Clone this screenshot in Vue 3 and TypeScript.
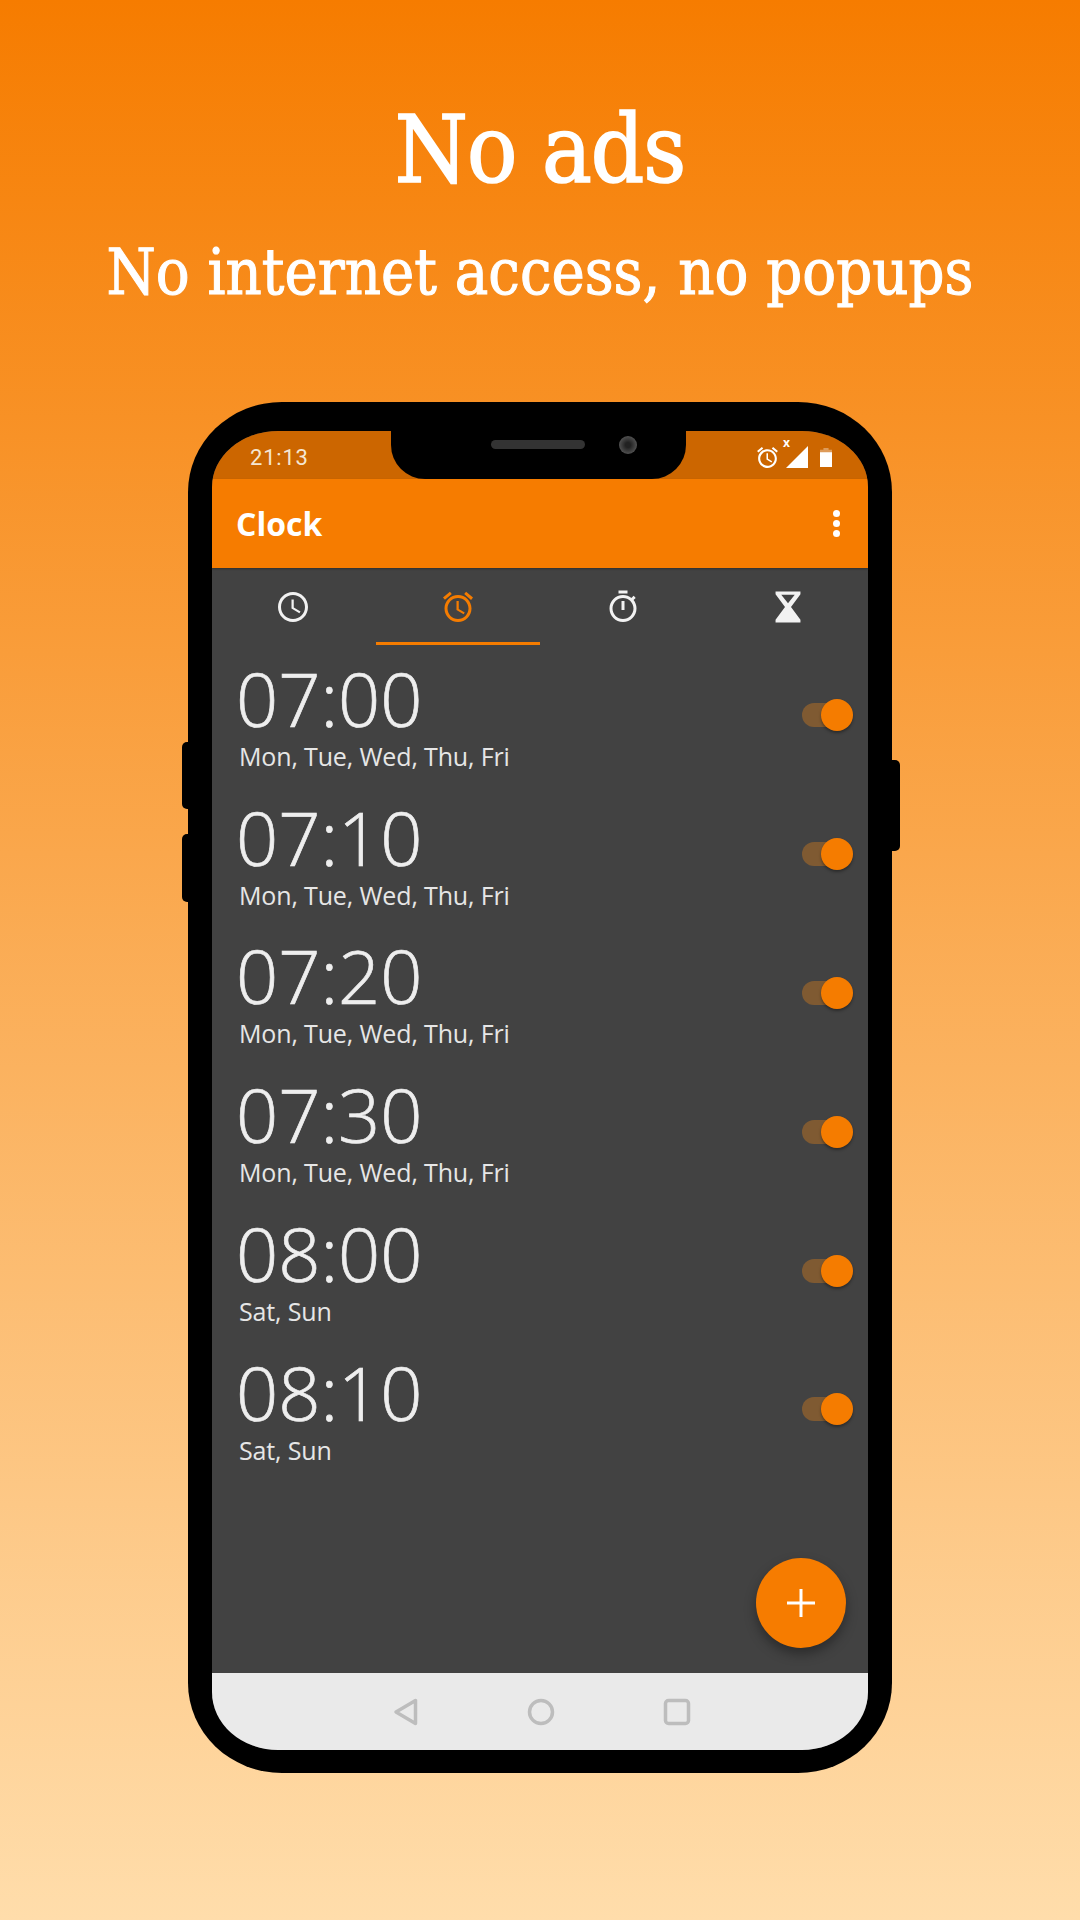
<script setup lang="ts">
interface Alarm { time: string; days: string }
const weekdays = 'Mon, Tue, Wed, Thu, Fri'
const weekend = 'Sat, Sun'
const alarms: Alarm[] = [
  { time: '07:00', days: weekdays },
  { time: '07:10', days: weekdays },
  { time: '07:20', days: weekdays },
  { time: '07:30', days: weekdays },
  { time: '08:00', days: weekend },
  { time: '08:10', days: weekend },
]
const alarmPath = 'M22 5.72l-4.6-3.86-1.29 1.53 4.6 3.86L22 5.72zM7.88 3.39L6.6 1.86 2 5.71l1.29 1.53 4.59-3.85zM12.5 8H11v6l4.75 2.85.75-1.23-4-2.37V8zM12 4c-4.97 0-9 4.03-9 9s4.02 9 9 9c4.97 0 9-4.03 9-9s-4.03-9-9-9zm0 16c-3.87 0-7-3.13-7-7s3.13-7 7-7 7 3.13 7 7-3.13 7-7 7z'
</script>

<template>
  <main class="page">
    <h1 class="title">No ads</h1>
    <p class="subtitle">No internet access, no popups</p>

    <div class="phone">
      <span class="side side-l1"></span>
      <span class="side side-l2"></span>
      <span class="side side-r"></span>

      <div class="screen">
        <div class="status">
          <span class="status-time">21:13</span>
          <div class="status-icons">
            <svg class="st-alarm" viewBox="0 0 24 24"><path :d="alarmPath" /></svg>
            <svg class="st-signal" viewBox="0 0 22 22"><path d="M22 0v22H0z" /></svg>
            <span class="st-x">x</span>
            <svg class="st-batt" viewBox="0 0 14 22"><path d="M4 2V0h6v2h4v20H0V2z" opacity=".35" /><path d="M0 5h14v17H0z" /></svg>
          </div>
        </div>

        <header class="appbar">
          <span class="appbar-title">Clock</span>
          <div class="more"><i></i><i></i><i></i></div>
        </header>

        <nav class="tabs">
          <div class="tab">
            <svg class="tab-icon" viewBox="0 0 24 24"><path d="M11.99 2C6.47 2 2 6.48 2 12s4.47 10 9.99 10C17.52 22 22 17.52 22 12S17.52 2 11.99 2zM12 20c-4.42 0-8-3.58-8-8s3.58-8 8-8 8 3.58 8 8-3.58 8-8 8z" /><path d="M12.5 7H11v6l5.25 3.15.75-1.23-4.5-2.67z" /></svg>
          </div>
          <div class="tab active">
            <svg class="tab-icon" viewBox="0 0 24 24"><path :d="alarmPath" /></svg>
          </div>
          <div class="tab">
            <svg class="tab-icon" viewBox="0 0 24 24"><path d="M15 1H9v2h6V1zm-4 13h2V8h-2v6zm8.03-6.61l1.42-1.42c-.43-.51-.9-.99-1.41-1.41l-1.42 1.42C16.07 4.74 14.12 4 12 4c-4.97 0-9 4.03-9 9s4.02 9 9 9 9-4.03 9-9c0-2.12-.74-4.07-1.97-5.61zM12 20c-3.87 0-7-3.13-7-7s3.13-7 7-7 7 3.13 7 7-3.13 7-7 7z" /></svg>
          </div>
          <div class="tab">
            <svg class="tab-icon" viewBox="0 0 24 24"><path fill-rule="evenodd" d="M3.7 1.7H20.3V3.5L14 12L20.3 20.5V22.3H3.7V20.5L10 12L3.7 3.5ZM7.500 3.800L12 9.500L16.500 3.800Z" /></svg>
          </div>
        </nav>

        <section class="list">
          <div v-for="a in alarms" :key="a.time" class="row">
            <div class="row-text">
              <div class="time">{{ a.time }}</div>
              <div class="days">{{ a.days }}</div>
            </div>
            <div class="toggle"><span class="track"></span><span class="thumb"></span></div>
          </div>
          <button class="fab" type="button" aria-label="Add alarm">
            <svg viewBox="0 0 28 28" width="28" height="28"><path d="M12.5 0h3v12.5H28v3H15.500V28h-3V15.500H0v-3h12.500z" /></svg>
          </button>
        </section>

        <footer class="navbar">
          <svg class="nav-icon" viewBox="0 0 30 30"><path d="M25.500 3.500v23L6 15z" /></svg>
          <svg class="nav-icon" viewBox="0 0 30 30"><circle cx="15" cy="15" r="11.500" /></svg>
          <svg class="nav-icon" viewBox="0 0 30 30"><rect x="3.500" y="3.500" width="23" height="23" rx="3" /></svg>
        </footer>

        <div class="notch">
          <span class="speaker"></span>
          <span class="camera"></span>
        </div>
      </div>
    </div>
  </main>
</template>

<style scoped>
.page {
  width: 1080px;
  height: 1920px;
  box-sizing: border-box;
  padding-top: 100px;
  display: flex;
  flex-direction: column;
  align-items: center;
  overflow: hidden;
  background: linear-gradient(180deg, #f67c00 0%, #ffddab 100%);
  color: #fff;
}
.title {
  margin: 0;
  font: 400 93px/100px "DejaVu Serif Condensed", "DejaVu Serif", serif;
  letter-spacing: -1px;
  -webkit-text-stroke: 1.6px #fff;
}
.subtitle {
  margin: 37px 0 0;
  font: 400 62.6px/72px "DejaVu Serif Condensed", "DejaVu Serif", serif;
  white-space: nowrap;
  -webkit-text-stroke: 1px #fff;
}
.phone {
  position: relative;
  flex: none;
  margin-top: 93px;
  width: 704px;
  height: 1371px;
  box-sizing: border-box;
  padding: 29px 24px 23px 24px;
  background: #000;
  border-radius: 94px / 90px;
}
.side {
  position: absolute;
  background: #000;
  width: 10px;
}
.side-l1 { left: -6px; top: 340px; height: 67px; border-radius: 5px 0 0 5px; }
.side-l2 { left: -6px; top: 432px; height: 68px; border-radius: 5px 0 0 5px; }
.side-r { right: -8px; top: 358px; height: 91px; border-radius: 0 5px 5px 0; }
.screen {
  position: relative;
  height: 100%;
  display: flex;
  flex-direction: column;
  background: #424242;
  border-radius: 66px 66px 66px 66px / 56px 56px 58px 58px;
  overflow: hidden;
  font-family: "Open Sans", sans-serif;
}
.status {
  flex: none;
  height: 48px;
  background: #cc6600;
  display: flex;
  align-items: center;
  justify-content: space-between;
  padding: 4px 36px 0 38px;
  box-sizing: border-box;
  color: #f5e6d3;
}
.status-time {
  font-family: Roboto, sans-serif;
  font-size: 22px;
  letter-spacing: 0.8px;
}
.status-icons {
  position: relative;
  display: flex;
  align-items: center;
}
.status-icons svg { fill: #fff; display: block; }
.st-alarm { width: 25px; height: 25px; margin-right: 6px; }
.st-signal { width: 22px; height: 22px; margin-right: 12px; }
.st-batt { width: 12px; height: 21px; }
.st-x {
  position: absolute;
  left: 28px;
  top: -8px;
  font-size: 12px;
  line-height: 12px;
  font-weight: 700;
  color: #fff;
}
.appbar {
  flex: none;
  height: 89px;
  background: #f67c00;
  display: flex;
  align-items: center;
  justify-content: space-between;
  padding: 0 27px 0 24px;
  box-shadow: 0 1px 2px rgba(0, 0, 0, 0.3);
  position: relative;
}
.appbar-title {
  font-size: 32px;
  font-weight: 700;
  color: #fff;
}
.more {
  display: flex;
  flex-direction: column;
  gap: 3px;
  margin-right: 1px;
}
.more i {
  width: 7px;
  height: 7px;
  border-radius: 50%;
  background: #fff;
}
.tabs {
  flex: none;
  height: 77px;
  display: grid;
  grid-template-columns: repeat(4, 1fr);
}
.tab {
  display: flex;
  justify-content: center;
  padding-top: 20px;
  box-sizing: border-box;
  color: #f2f2f2;
}
.tab:nth-child(1) .tab-icon { margin-right: 2px; }
.tab:nth-child(3) .tab-icon { margin-left: 2px; }
.tab:nth-child(4) .tab-icon { margin-left: 3px; }
.tab.active {
  color: #f57c00;
  border-bottom: 3px solid #f57c00;
}
.tab-icon {
  width: 36px;
  height: 38px;
  fill: currentColor;
  display: block;
}
.list {
  position: relative;
  flex: 1;
  min-height: 0;
}
.row {
  height: 138.8px;
  display: flex;
  justify-content: space-between;
  align-items: center;
  padding: 0 15px 0 24px;
  box-sizing: border-box;
}
.time {
  font-size: 74px;
  line-height: 82px;
  font-weight: 300;
  color: #eeeeee;
  -webkit-text-stroke: 0.7px #eeeeee;
}
.days {
  margin-left: 3px;
  margin-top: 1px;
  font-size: 25px;
  line-height: 30px;
  letter-spacing: -0.15px;
  color: #e6e6e6;
}
.toggle {
  position: relative;
  width: 51px;
  height: 32px;
  margin-top: 2px;
  flex: none;
}
.track {
  position: absolute;
  left: 0;
  top: 4px;
  width: 40px;
  height: 24px;
  border-radius: 12px;
  background: #7f5a32;
}
.thumb {
  position: absolute;
  right: 0;
  top: 0;
  width: 32px;
  height: 32px;
  border-radius: 50%;
  background: #f57c00;
  box-shadow: 0 2px 3px rgba(0, 0, 0, 0.35);
}
.fab {
  position: absolute;
  right: 22px;
  bottom: 25px;
  width: 90px;
  height: 90px;
  padding: 0;
  border: 0;
  border-radius: 50%;
  background: #f67c00;
  display: flex;
  align-items: center;
  justify-content: center;
  box-shadow: 0 6px 12px rgba(0, 0, 0, 0.35);
}
.fab svg { fill: #fff; }
.navbar {
  flex: none;
  height: 77px;
  background: #eaeaea;
  display: flex;
  align-items: center;
  justify-content: center;
  gap: 106px;
  padding-left: 2px;
  box-sizing: border-box;
}
.nav-icon {
  width: 30px;
  height: 30px;
  fill: none;
  stroke: #bdbdbd;
  stroke-width: 3.5;
  stroke-linejoin: round;
}
.notch {
  position: absolute;
  left: 179px;
  top: 0;
  width: 295px;
  height: 48px;
  background: #000;
  border-radius: 0 0 34px 34px;
}
.speaker {
  position: absolute;
  left: 100px;
  top: 9px;
  width: 94px;
  height: 9px;
  border-radius: 5px;
  background: #333;
}
.camera {
  position: absolute;
  left: 228px;
  top: 5px;
  width: 18px;
  height: 18px;
  border-radius: 50%;
  background: radial-gradient(circle, #222 20%, #555 75%);
}
</style>
